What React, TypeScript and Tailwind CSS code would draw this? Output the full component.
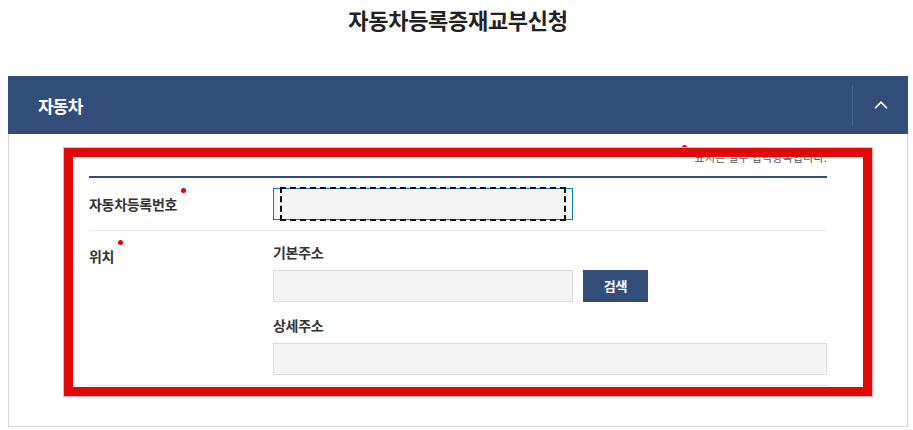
import { useState } from "react";

function RequiredDot({ className = "" }: { className?: string }) {
  return <span className={`absolute h-[5px] w-[5px] rounded-full bg-[#e50012] ${className}`} />;
}

export default function App() {
  const [open, setOpen] = useState(true);

  return (
    <div className="relative min-h-[430px] bg-white font-['Noto_Sans_CJK_KR','Noto_Sans',sans-serif] text-[#222]">
      <div className="ml-[8px] w-[900px]">
        <div className="h-[76px] pt-[4px] text-center">
          <h1 className="text-[22px] font-bold leading-[30px] tracking-[-0.3px] text-[#222]">
            자동차등록증재교부신청
          </h1>
        </div>

        <section>
          <div className="flex h-[58px] items-center justify-between bg-[#344e7a] pl-[30px]">
            <h2 className="text-[17px] font-bold leading-none tracking-[-0.8px] text-white">자동차</h2>
            <button
              type="button"
              onClick={() => setOpen(!open)}
              className="flex h-[40px] w-[56px] items-center justify-center border-l border-[#4b6390]"
              aria-label="접기"
            >
              <svg width="14" height="8" viewBox="0 0 14 8" fill="none">
                <polyline points="1,7.2 7,1.2 13,7.2" stroke="white" strokeWidth="1.6" />
              </svg>
            </button>
          </div>

          {open ? (
            <div className="border border-t-0 border-[#d5d5d5] px-[80px] pb-[40px] pt-[15px]">
              <p className="text-right text-[11px] leading-[16px] tracking-[0.2px] text-[#555]">
                <span className="relative">
                  <RequiredDot className="left-[-13px] top-[-4px]" />
                  표시는 필수 입력항목입니다.
                </span>
              </p>

              <div className="mt-[11px] border-t-2 border-[#344e7a]">
                <div className="grid grid-cols-[184px_1fr] items-center border-b border-[#e8e8e8] py-[10px]">
                  <label className="text-[14px] font-bold leading-[20px] tracking-[-0.3px] text-[#333]">
                    <span className="relative">
                      자동차등록번호
                      <RequiredDot className="-right-[9px] top-[-6px]" />
                    </span>
                  </label>
                  <div className="relative w-[300px]">
                    <input
                      type="text"
                      className="block h-[32px] w-full border border-[#0b79c8] bg-[#f4f4f4] px-3 text-[14px] outline-none"
                    />
                    <span className="pointer-events-none absolute bottom-[-1px] left-[7px] right-[7px] top-[-1px] border-2 border-dashed border-[#111]" />
                  </div>
                </div>

                <div className="grid grid-cols-[184px_1fr] border-b border-[#e8e8e8] pb-[10px]">
                  <label className="pt-[15px] text-[14px] font-bold leading-[20px] tracking-[-0.3px] text-[#333]">
                    <span className="relative">
                      위치
                      <RequiredDot className="-right-[9px] top-[-6px]" />
                    </span>
                  </label>
                  <div className="pt-[11px]">
                    <div className="text-[14px] font-bold leading-[20px] tracking-[-0.3px] text-[#333]">기본주소</div>
                    <div className="mt-[8px] flex gap-[10px]">
                      <input
                        type="text"
                        className="block h-[32px] w-[300px] border border-[#dcdcdc] bg-[#f4f4f4] px-3 text-[14px] outline-none"
                      />
                      <button
                        type="button"
                        className="h-[32px] w-[65px] bg-[#344e7a] text-[13px] font-bold tracking-[-0.3px] text-white"
                      >
                        검색
                      </button>
                    </div>
                    <div className="mt-[13px] text-[14px] font-bold leading-[20px] tracking-[-0.3px] text-[#333]">상세주소</div>
                    <input
                      type="text"
                      className="mt-[8px] block h-[32px] w-full border border-[#dcdcdc] bg-[#f4f4f4] px-3 text-[14px] outline-none"
                    />
                  </div>
                </div>
              </div>
            </div>
          ) : null}
        </section>
      </div>

      {/* red annotation box from the screenshot */}
      <div className="pointer-events-none absolute left-[64px] top-[148px] h-[248px] w-[808px] border-[9px] border-[#e10808] shadow-[0_0_0_1px_#f5b3b3]" />
    </div>
  );
}
